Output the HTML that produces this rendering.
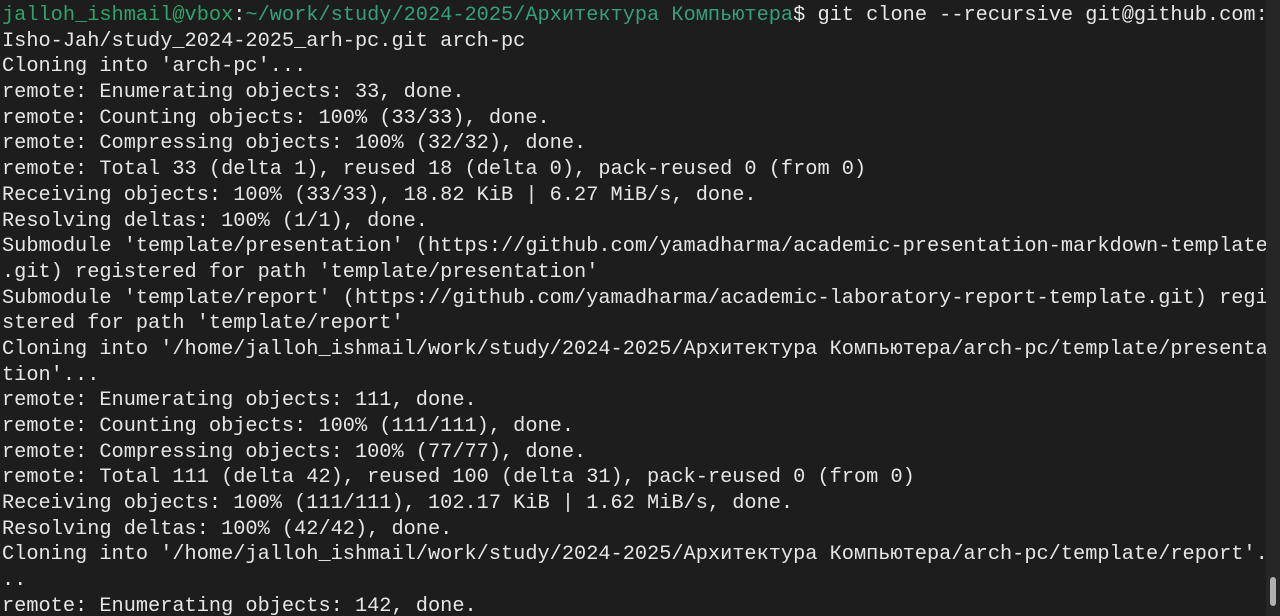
<!DOCTYPE html>
<html><head><meta charset="utf-8"><style>
html,body{margin:0;padding:0;width:1280px;height:616px;overflow:hidden;background:#1d1d1d}
pre{margin:0;padding:0 0 0 2px;font-family:"Liberation Mono","DejaVu Sans Mono",monospace;font-size:20.3px;line-height:25.68px;color:#e6e6e6;white-space:pre;position:relative;top:3px}
.g{color:#2ea36c}.b{color:#35a07c}
.track{position:absolute;right:0;top:0;width:14px;height:616px;background:#262626}
.thumb{position:absolute;right:4px;top:577px;width:6px;height:29px;border-radius:3px;background:#b0b0b0}
</style></head><body>
<pre><span class="g">jalloh_ishmail@vbox</span>:<span class="b">~/work/study/2024-2025/Архитектура Компьютера</span>$ git clone --recursive git@github.com:
Isho-Jah/study_2024-2025_arh-pc.git arch-pc
Cloning into 'arch-pc'...
remote: Enumerating objects: 33, done.
remote: Counting objects: 100% (33/33), done.
remote: Compressing objects: 100% (32/32), done.
remote: Total 33 (delta 1), reused 18 (delta 0), pack-reused 0 (from 0)
Receiving objects: 100% (33/33), 18.82 KiB | 6.27 MiB/s, done.
Resolving deltas: 100% (1/1), done.
Submodule 'template/presentation' (https://github.com/yamadharma/academic-presentation-markdown-template
.git) registered for path 'template/presentation'
Submodule 'template/report' (https://github.com/yamadharma/academic-laboratory-report-template.git) regi
stered for path 'template/report'
Cloning into '/home/jalloh_ishmail/work/study/2024-2025/Архитектура Компьютера/arch-pc/template/presenta
tion'...
remote: Enumerating objects: 111, done.
remote: Counting objects: 100% (111/111), done.
remote: Compressing objects: 100% (77/77), done.
remote: Total 111 (delta 42), reused 100 (delta 31), pack-reused 0 (from 0)
Receiving objects: 100% (111/111), 102.17 KiB | 1.62 MiB/s, done.
Resolving deltas: 100% (42/42), done.
Cloning into '/home/jalloh_ishmail/work/study/2024-2025/Архитектура Компьютера/arch-pc/template/report'.
..
remote: Enumerating objects: 142, done.</pre>
<div class="track"></div><div class="thumb"></div>
</body></html>
